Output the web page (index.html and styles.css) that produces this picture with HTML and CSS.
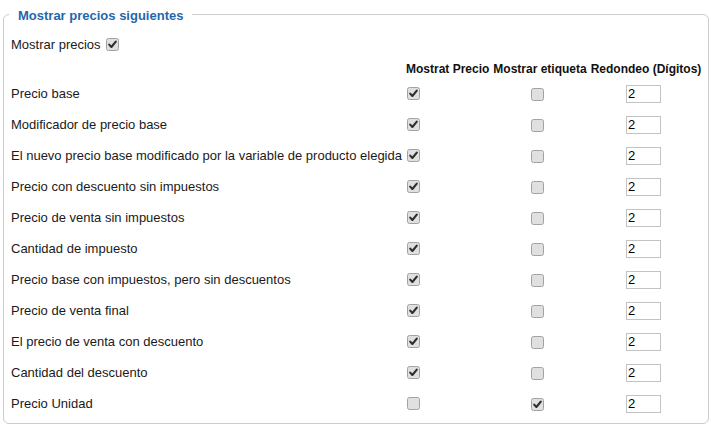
FILE: index.html
```html
<!DOCTYPE html>
<html lang="es">
<head>
<meta charset="utf-8">
<title>Mostrar precios siguientes</title>
<link rel="stylesheet" href="styles.css">
</head>
<body>
<fieldset class="prices">
  <legend class="prices-legend">Mostrar precios siguientes</legend>
  <div class="show-row">
    <span>Mostrar precios</span>
    <svg class="cb" viewBox="0 0 13 13"><rect x="0.5" y="0.5" width="12" height="12" rx="2"/><path d="M3.2 6.6 L5.4 9 L9.8 3.6"/></svg>
  </div>
  <table class="price-table">
    <thead>
      <tr>
        <th class="c-label"></th>
        <th>Mostrat Precio</th>
        <th>Mostrar etiqueta</th>
        <th>Redondeo (Dígitos)</th>
      </tr>
    </thead>
    <tbody>
      <tr><td class="c-label">Precio base</td><td class="c-show"><svg class="cb" viewBox="0 0 13 13"><rect x="0.5" y="0.5" width="12" height="12" rx="2"/><path d="M3.2 6.6 L5.4 9 L9.8 3.6"/></svg></td><td class="c-mid"><svg class="cb off" viewBox="0 0 13 13"><rect x="0.5" y="0.5" width="12" height="12" rx="2"/></svg></td><td class="c-mid"><input class="digits" type="text" value="2"></td></tr>
      <tr><td class="c-label">Modificador de precio base</td><td class="c-show"><svg class="cb" viewBox="0 0 13 13"><rect x="0.5" y="0.5" width="12" height="12" rx="2"/><path d="M3.2 6.6 L5.4 9 L9.8 3.6"/></svg></td><td class="c-mid"><svg class="cb off" viewBox="0 0 13 13"><rect x="0.5" y="0.5" width="12" height="12" rx="2"/></svg></td><td class="c-mid"><input class="digits" type="text" value="2"></td></tr>
      <tr><td class="c-label">El nuevo precio base modificado por la variable de producto elegida</td><td class="c-show"><svg class="cb" viewBox="0 0 13 13"><rect x="0.5" y="0.5" width="12" height="12" rx="2"/><path d="M3.2 6.6 L5.4 9 L9.8 3.6"/></svg></td><td class="c-mid"><svg class="cb off" viewBox="0 0 13 13"><rect x="0.5" y="0.5" width="12" height="12" rx="2"/></svg></td><td class="c-mid"><input class="digits" type="text" value="2"></td></tr>
      <tr><td class="c-label">Precio con descuento sin impuestos</td><td class="c-show"><svg class="cb" viewBox="0 0 13 13"><rect x="0.5" y="0.5" width="12" height="12" rx="2"/><path d="M3.2 6.6 L5.4 9 L9.8 3.6"/></svg></td><td class="c-mid"><svg class="cb off" viewBox="0 0 13 13"><rect x="0.5" y="0.5" width="12" height="12" rx="2"/></svg></td><td class="c-mid"><input class="digits" type="text" value="2"></td></tr>
      <tr><td class="c-label">Precio de venta sin impuestos</td><td class="c-show"><svg class="cb" viewBox="0 0 13 13"><rect x="0.5" y="0.5" width="12" height="12" rx="2"/><path d="M3.2 6.6 L5.4 9 L9.8 3.6"/></svg></td><td class="c-mid"><svg class="cb off" viewBox="0 0 13 13"><rect x="0.5" y="0.5" width="12" height="12" rx="2"/></svg></td><td class="c-mid"><input class="digits" type="text" value="2"></td></tr>
      <tr><td class="c-label">Cantidad de impuesto</td><td class="c-show"><svg class="cb" viewBox="0 0 13 13"><rect x="0.5" y="0.5" width="12" height="12" rx="2"/><path d="M3.2 6.6 L5.4 9 L9.8 3.6"/></svg></td><td class="c-mid"><svg class="cb off" viewBox="0 0 13 13"><rect x="0.5" y="0.5" width="12" height="12" rx="2"/></svg></td><td class="c-mid"><input class="digits" type="text" value="2"></td></tr>
      <tr><td class="c-label">Precio base con impuestos, pero sin descuentos</td><td class="c-show"><svg class="cb" viewBox="0 0 13 13"><rect x="0.5" y="0.5" width="12" height="12" rx="2"/><path d="M3.2 6.6 L5.4 9 L9.8 3.6"/></svg></td><td class="c-mid"><svg class="cb off" viewBox="0 0 13 13"><rect x="0.5" y="0.5" width="12" height="12" rx="2"/></svg></td><td class="c-mid"><input class="digits" type="text" value="2"></td></tr>
      <tr><td class="c-label">Precio de venta final</td><td class="c-show"><svg class="cb" viewBox="0 0 13 13"><rect x="0.5" y="0.5" width="12" height="12" rx="2"/><path d="M3.2 6.6 L5.4 9 L9.8 3.6"/></svg></td><td class="c-mid"><svg class="cb off" viewBox="0 0 13 13"><rect x="0.5" y="0.5" width="12" height="12" rx="2"/></svg></td><td class="c-mid"><input class="digits" type="text" value="2"></td></tr>
      <tr><td class="c-label">El precio de venta con descuento</td><td class="c-show"><svg class="cb" viewBox="0 0 13 13"><rect x="0.5" y="0.5" width="12" height="12" rx="2"/><path d="M3.2 6.6 L5.4 9 L9.8 3.6"/></svg></td><td class="c-mid"><svg class="cb off" viewBox="0 0 13 13"><rect x="0.5" y="0.5" width="12" height="12" rx="2"/></svg></td><td class="c-mid"><input class="digits" type="text" value="2"></td></tr>
      <tr><td class="c-label">Cantidad del descuento</td><td class="c-show"><svg class="cb" viewBox="0 0 13 13"><rect x="0.5" y="0.5" width="12" height="12" rx="2"/><path d="M3.2 6.6 L5.4 9 L9.8 3.6"/></svg></td><td class="c-mid"><svg class="cb off" viewBox="0 0 13 13"><rect x="0.5" y="0.5" width="12" height="12" rx="2"/></svg></td><td class="c-mid"><input class="digits" type="text" value="2"></td></tr>
      <tr><td class="c-label">Precio Unidad</td><td class="c-show"><svg class="cb off" viewBox="0 0 13 13"><rect x="0.5" y="0.5" width="12" height="12" rx="2"/></svg></td><td class="c-mid"><svg class="cb" viewBox="0 0 13 13"><rect x="0.5" y="0.5" width="12" height="12" rx="2"/><path d="M3.2 6.6 L5.4 9 L9.8 3.6"/></svg></td><td class="c-mid"><input class="digits" type="text" value="2"></td></tr>
    </tbody>
  </table>
</fieldset>
</body>
</html>
```
FILE: styles.css
```css
html, body {
  margin: 0;
  padding: 0;
  background: #ffffff;
}
body {
  font-family: "Liberation Sans", Arial, sans-serif;
  font-size: 13px;
  color: #1a1a1a;
}
.prices {
  margin: 4px 2px 0 3px;
  padding: 10px 4px 4px 5px;
  border: 1px solid #cccccc;
  border-radius: 6px;
  min-width: 0;
}
.prices-legend {
  padding: 4px 9px 0 9px;
  font-size: 13px;
  line-height: 16px;
  font-weight: bold;
  color: #1f68ac;
}
.show-row {
  display: flex;
  align-items: center;
  gap: 5px;
  height: 20px;
  padding-left: 2px;
  margin-bottom: 7px;
}
.cb {
  display: block;
  width: 13px;
  height: 13px;
}
.cb rect {
  fill: #e0e0e0;
  stroke: #a2a2a2;
  stroke-width: 1;
}
.cb path {
  fill: none;
  stroke: #2e2e2e;
  stroke-width: 2.1;
  stroke-linecap: round;
  stroke-linejoin: round;
}
.price-table {
  border-collapse: collapse;
  border-spacing: 0;
}
.price-table th {
  height: 17px;
  padding: 0 2px;
  font-size: 12px;
  line-height: 17px;
  font-weight: bold;
  color: #111111;
  white-space: nowrap;
  text-align: center;
  vertical-align: middle;
}
.price-table td {
  height: 31px;
  padding: 0 2px;
  vertical-align: middle;
  white-space: nowrap;
}
.c-show .cb {
  margin-left: 1px;
}
.c-mid {
  text-align: center;
}
.c-mid .cb {
  display: inline-block;
  vertical-align: middle;
  margin-right: 6px;
}
.digits {
  box-sizing: border-box;
  width: 35px;
  height: 18px;
  margin: 0 5px 0 0;
  padding: 0 1px;
  border: 1px solid #c3c3c3;
  border-radius: 0;
  font-family: "Liberation Sans", Arial, sans-serif;
  font-size: 13px;
  color: #000000;
  background: #ffffff;
  vertical-align: middle;
}
```
